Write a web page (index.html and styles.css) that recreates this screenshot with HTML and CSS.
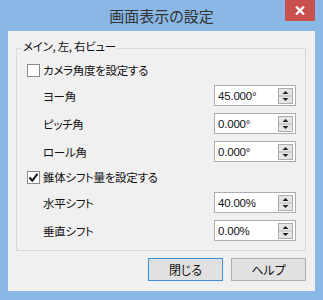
FILE: index.html
```html
<!DOCTYPE html>
<html lang="ja">
<head>
  <meta charset="UTF-8" />
  <link rel="stylesheet" href="styles.css">
</head>
<body>
  <div class="window">
    <div class="titlebar">
      <span class="title">画面表示の設定</span>
      <button class="close" aria-label="閉じる">
        <svg width="10" height="9" viewBox="0 0 10 9"><path d="M1 0.5 L9 8.5 M9 0.5 L1 8.5" stroke="#fff" stroke-width="2.2" fill="none"/></svg>
      </button>
    </div>

    <div class="client">
      <fieldset class="group">
        <legend>メイン, 左, 右ビュー</legend>
        <div class="rows">
          <label class="check"><span class="box"></span>カメラ角度を設定する</label>

          <div class="field">
            <span class="label">ヨー角</span>
            <div class="spin"><span class="value">45.000°</span><span class="arrows"></span></div>
          </div>
          <div class="field">
            <span class="label">ピッチ角</span>
            <div class="spin"><span class="value">0.000°</span><span class="arrows"></span></div>
          </div>
          <div class="field">
            <span class="label">ロール角</span>
            <div class="spin"><span class="value">0.000°</span><span class="arrows"></span></div>
          </div>

          <label class="check"><span class="box checked"><svg width="11" height="11" viewBox="0 0 11 11"><path d="M1.5 5.5 L4.3 8.6 L9.5 1.8" stroke="#111" stroke-width="2" fill="none"/></svg></span>錐体シフト量を設定する</label>

          <div class="field">
            <span class="label">水平シフト</span>
            <div class="spin"><span class="value">40.00%</span><span class="arrows"></span></div>
          </div>
          <div class="field">
            <span class="label">垂直シフト</span>
            <div class="spin"><span class="value">0.00%</span><span class="arrows"></span></div>
          </div>
        </div>
      </fieldset>

      <div class="buttons">
        <button class="btn default">閉じる</button>
        <button class="btn">ヘルプ</button>
      </div>
    </div>
  </div>

  <script>
    // spinner arrows are the same everywhere, fill them in once
    const arrowSvg =
      '<svg width="15" height="16" viewBox="0 0 15 16">' +
      '<rect x="0.5" y="0.5" width="14" height="15" fill="#e6e6e6" stroke="#acacac"/>' +
      '<line x1="1" y1="8" x2="14" y2="8" stroke="#b8b8b8"/>' +
      '<path d="M7.5 3 L10.5 6 L4.5 6 Z" fill="#222"/>' +
      '<path d="M4.5 10 L10.5 10 L7.5 13 Z" fill="#222"/>' +
      '</svg>';
    document.querySelectorAll('.arrows').forEach(function (el) {
      el.innerHTML = arrowSvg;
    });
  </script>
</body>
</html>
```

FILE: styles.css
```css
body {
  margin: 0;
  font-family: "Noto Sans CJK JP", "Noto Sans", sans-serif;
  font-feature-settings: "palt";
  font-size: 11.5px;
  letter-spacing: -0.3px;
  color: #111;
}

.window {
  width: 323px;
  height: 300px;
  background: #8ab8e6;
  box-sizing: border-box;
  padding: 0 8px 9px 8px;
  display: flex;
  flex-direction: column;
}

.titlebar {
  position: relative;
  height: 31px;
  display: flex;
  align-items: center;
  justify-content: center;
}

.title {
  font-size: 15px;
  letter-spacing: 0;
  color: #333;
  line-height: 1;
  margin-top: -1px;
}

.close {
  position: absolute;
  top: 0;
  right: 0;
  width: 30px;
  height: 21px;
  border: none;
  padding: 0;
  background: #c9504c;
  display: flex;
  align-items: center;
  justify-content: center;
}

.client {
  flex: 1;
  background: #f0f0f0;
  padding: 9px 9px 9px 8px;
  display: flex;
  flex-direction: column;
}

.group {
  margin: 0;
  padding: 6px 9px 9px 5px;
  border: 1px solid #d9d9d9;
  min-width: 0;
}

.group legend {
  padding: 0 1px 4px 1px;
  line-height: 12px;
}

.rows {
  display: flex;
  flex-direction: column;
  gap: 7px;
  padding-left: 5px;
}

.check {
  height: 16px;
  display: flex;
  align-items: center;
  gap: 3px;
}

.box {
  width: 11px;
  height: 11px;
  border: 1px solid #8a8a8a;
  background: #fff;
  display: flex;
  align-items: center;
  justify-content: center;
}

.field {
  height: 21px;
  display: flex;
  align-items: center;
  padding-left: 16px;
}

.spin {
  margin-left: auto;
  width: 82px;
  height: 21px;
  box-sizing: border-box;
  border: 1px solid #abadb3;
  background: #fff;
  display: flex;
  align-items: center;
  padding: 0 2px 0 3px;
}

.value {
  flex: 1;
  font-family: "Liberation Sans", Arial, sans-serif;
  font-size: 11.5px;
  letter-spacing: -0.2px;
}

.arrows {
  display: flex;
}

.buttons {
  margin-top: 7px;
  display: flex;
  justify-content: flex-end;
  gap: 8px;
}

.btn {
  width: 75px;
  height: 23px;
  border: 1px solid #adadad;
  background: #e1e1e1;
  font-family: inherit;
  font-feature-settings: "palt";
  font-size: 12px;
  color: #111;
  padding: 0;
}

.btn.default {
  border-color: #3c8fdd;
}
```
